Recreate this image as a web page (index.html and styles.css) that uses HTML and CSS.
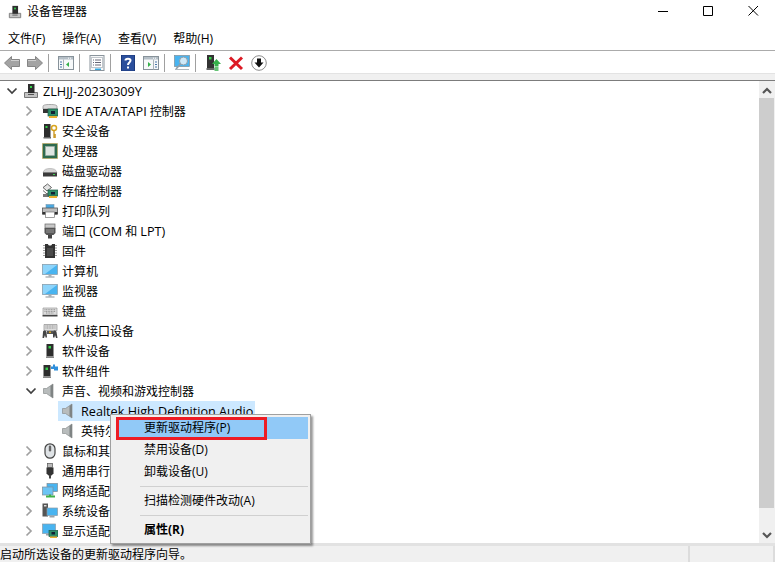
FILE: index.html
```html
<!DOCTYPE html>
<html lang="zh-CN">
<head>
<meta charset="utf-8">
<title>设备管理器</title>
<link rel="stylesheet" href="styles.css">
</head>
<body>
<svg class="defs" width="0" height="0" aria-hidden="true">
  <defs>
    <symbol id="i-chev-r" viewBox="0 0 8 12"><path d="M1.500 1.500 6 6l-4.500 4.500" fill="none" stroke="#a0a0a0" stroke-width="1.700"/></symbol>
    <symbol id="i-chev-d" viewBox="0 0 12 8"><path d="M1.500 1.500 6 6l4.500-4.500" fill="none" stroke="#404040" stroke-width="1.700"/></symbol>
    <symbol id="i-tower" viewBox="0 0 16 16">
      <path d="M1.500 9.500h13v5h-13z" fill="#c4c4c4" stroke="#777"/>
      <rect x="5" y="1" width="6.500" height="9" fill="#2d2d2d"/>
      <rect x="7" y="3" width="2" height="2" fill="#35d04a"/>
      <rect x="5" y="11" width="6" height="1" fill="#555"/>
    </symbol>
    <symbol id="i-ide" viewBox="0 0 16 16">
      <path d="M1 3.500C1 2 3 1.500 8 1.500s7 .5 7 2V6H1z" fill="#dcdcdc" stroke="#8a8a8a" stroke-width=".7"/>
      <rect x="1" y="6" width="13" height="4" fill="#333"/>
      <rect x="6" y="6" width="10" height="7" fill="#2f8f6a" stroke="#1c5a44" stroke-width=".7"/>
      <rect x="9" y="8" width="4" height="3" fill="#123"/>
      <rect x="7" y="13" width="8" height="2" fill="#e8b030"/>
    </symbol>
    <symbol id="i-sec" viewBox="0 0 16 16">
      <rect x="2" y="1" width="6.500" height="13" fill="#2d2d2d"/>
      <rect x="3.500" y="3" width="2" height="2" fill="#35d04a"/>
      <rect x="1.500" y="14" width="7.500" height="1.500" fill="#666"/>
      <circle cx="12" cy="5" r="2.500" fill="none" stroke="#d9a520" stroke-width="1.500"/>
      <path d="M12 7.500V15m0-3h2m-2 2h2" fill="none" stroke="#c8921a" stroke-width="1.300"/>
    </symbol>
    <symbol id="i-cpu" viewBox="0 0 16 16">
      <rect x=".5" y=".5" width="15" height="15" fill="#2f6b4f" stroke="#c9a548" stroke-dasharray="1 1"/>
      <rect x="1.500" y="1.500" width="13" height="13" fill="#2f6b4f"/>
      <rect x="3.500" y="3.500" width="9" height="9" fill="#dfe6e2" stroke="#9fb0a8" stroke-width=".6"/>
    </symbol>
    <symbol id="i-disk" viewBox="0 0 16 16">
      <path d="M1 9.500C2 6.500 4 5.500 8 5.500s6 1 7 4z" fill="#d4d4d4" stroke="#aaa" stroke-width=".6"/>
      <rect x="1" y="9.500" width="14" height="4" fill="#3a3a3a"/>
      <rect x="11" y="11" width="2" height="1" fill="#40d050"/>
    </symbol>
    <symbol id="i-store" viewBox="0 0 16 16">
      <path d="M1 4.500 5.500 1 9.500 4.500 5 8z" fill="#e4e4e4" stroke="#444" stroke-width=".8"/>
      <path d="M1 7.500 5 11l1-.8" fill="none" stroke="#444" stroke-width=".8"/>
      <rect x="1" y="11" width="6" height="3" fill="#777"/>
      <rect x="6" y="7" width="10" height="6" fill="#2f8f6a" stroke="#1c5a44" stroke-width=".7"/>
      <rect x="9" y="9" width="4" height="2.500" fill="#123"/>
      <rect x="7" y="13" width="8" height="2" fill="#e8b030"/>
    </symbol>
    <symbol id="i-print" viewBox="0 0 16 16">
      <rect x="4" y="1.500" width="8" height="4" fill="#4aa8e0" stroke="#7a9ab0" stroke-width=".6"/>
      <rect x=".5" y="5" width="15" height="6" fill="#bdbdbd" stroke="#555" stroke-width=".8"/>
      <rect x=".5" y="9" width="15" height="2.500" fill="#333"/>
      <rect x="3.500" y="9" width="9" height="5.500" fill="#fff" stroke="#777" stroke-width=".7"/>
    </symbol>
    <symbol id="i-port" viewBox="0 0 16 16">
      <rect x="3" y="1" width="10" height="4" fill="#c8c8c8" stroke="#666" stroke-width=".7"/>
      <path d="M2.500 5h11v5l-2 2h-7l-2-2z" fill="#555"/>
      <path d="M4 7h8M4 9h8" stroke="#aaa" stroke-width=".8"/>
      <rect x="6" y="12" width="4" height="3.500" fill="#444"/>
    </symbol>
    <symbol id="i-firm" viewBox="0 0 16 16">
      <path d="M3 1h3c0 2 4 2 4 0h3v14H3z" fill="#333"/>
      <path d="M1 2.500h2M1 5h2M1 7.500h2M1 10h2M1 12.500h2M13 2.500h2M13 5h2M13 7.500h2M13 10h2M13 12.500h2" stroke="#999"/>
      <path d="M5 5h6v8H5z" fill="#4a4a4a"/>
    </symbol>
    <symbol id="i-pc" viewBox="0 0 16 16">
      <rect x=".5" y="1.500" width="15" height="10" fill="#49b4f0" stroke="#8a9aa5" stroke-width=".7"/>
      <path d="M1 2h14L3 11H1z" fill="#8ed4fa"/>
      <rect x="6.500" y="11.500" width="3" height="2" fill="#a8b0b5"/>
      <rect x="3.500" y="13.500" width="9" height="1" fill="#8a9298"/>
    </symbol>
    <symbol id="i-kbd" viewBox="0 0 16 16">
      <path d="M1 5h14v7H1z" fill="#dcdcdc" stroke="#9a9a9a" stroke-width=".7"/>
      <path d="M2.500 6.700h11M2.500 8.400h11M4 10h8" stroke="#8f8f8f" stroke-dasharray="1 .6"/>
      <rect x=".5" y="12" width="15" height="1.500" fill="#444"/>
    </symbol>
    <symbol id="i-hid" viewBox="0 0 16 16">
      <path d="M2 1.500h13v6H2z" fill="#dcdcdc" stroke="#8f8f8f" stroke-width=".7"/>
      <path d="M3.500 3h10M3.500 5h10" stroke="#8f8f8f" stroke-dasharray="1 .6"/>
      <path d="M1 9c0-2 3-2 3.500 0l.5 5.500H3.500L3 12l-1 3H.5z" fill="#444"/>
      <path d="M11 9c0-2 3-2 3.500 0l1 6H14l-1-3-.5 2.500H11z" fill="#444"/>
      <path d="M5 8h6v3H5z" fill="#555"/>
      <rect x="7" y="8.500" width="2" height="1.500" fill="#d9a520"/>
    </symbol>
    <symbol id="i-soft" viewBox="0 0 16 16">
      <rect x="4.500" y="1" width="7" height="12.500" fill="#2d2d2d"/>
      <rect x="6.500" y="3" width="2.500" height="2.500" fill="#35d04a"/>
      <rect x="4" y="13.500" width="8" height="1.500" fill="#888"/>
    </symbol>
    <symbol id="i-comp" viewBox="0 0 16 16">
      <rect x="1.500" y="2" width="7" height="11.500" fill="#2d2d2d"/>
      <rect x="3.500" y="4.500" width="2.500" height="2.500" fill="#35d04a"/>
      <rect x="1" y="13.500" width="8" height="1.500" fill="#888"/>
      <path d="M9 3.500h2V1.500h2v2h3v4h-4V6H9z" fill="#2f8fdc"/>
    </symbol>
    <symbol id="i-spk" viewBox="0 0 16 16">
      <path d="M1.500 5.500h3L11 1v14L4.500 10.500h-3z" fill="#b8bcbc" stroke="#8a8e8e" stroke-width=".7"/>
      <path d="M8.500 3v10L11 15V1z" fill="#7f8484"/>
    </symbol>
    <symbol id="i-mouse" viewBox="0 0 16 16">
      <rect x="3" y=".8" width="10" height="14.400" rx="5" fill="#dfe3e6" stroke="#444" stroke-width="1.200"/>
      <rect x="6.800" y="2.500" width="2.400" height="6" rx="1.200" fill="#666"/>
    </symbol>
    <symbol id="i-usb" viewBox="0 0 16 16">
      <rect x="5.500" y=".5" width="5" height="4" fill="#bbb" stroke="#555" stroke-width=".7"/>
      <path d="M4.500 4.500h7v6l-2 2h-3l-2-2z" fill="#333"/>
      <rect x="7" y="12" width="2" height="3.500" fill="#444"/>
    </symbol>
    <symbol id="i-net" viewBox="0 0 16 16">
      <rect x="5" y=".5" width="10.500" height="8" fill="#49b4f0" stroke="#7e8e98" stroke-width=".7"/>
      <rect x=".5" y="4" width="10.500" height="8" fill="#6cc4f4" stroke="#7e8e98" stroke-width=".7"/>
      <path d="M4 13.500h9" stroke="#3fb04a" stroke-width="2"/>
      <path d="M8 11.500v2" stroke="#3fb04a" stroke-width="2"/>
    </symbol>
    <symbol id="i-sys" viewBox="0 0 16 16">
      <rect x=".5" y=".5" width="5.500" height="13" fill="#555"/>
      <rect x="2" y="2" width="2.500" height="1.500" fill="#ddd"/>
      <rect x="5" y="5" width="10.500" height="7.500" fill="#49b4f0" stroke="#8a9aa5" stroke-width=".7"/>
      <rect x="7.500" y="13" width="5" height="1.500" fill="#9aa2a8"/>
    </symbol>
    <symbol id="i-disp" viewBox="0 0 16 16">
      <rect x=".5" y="1" width="13" height="9.500" fill="#49b4f0" stroke="#8a9aa5" stroke-width=".7"/>
      <rect x="4" y="11" width="5" height="1.500" fill="#9aa2a8"/>
      <rect x="7" y="7.500" width="9" height="6" fill="#2f8f6a" stroke="#1c5a44" stroke-width=".7"/>
      <rect x="9.500" y="9" width="3.500" height="2.500" fill="#123"/>
      <rect x="8" y="13.500" width="7" height="1.500" fill="#e8b030"/>
    </symbol>
    <symbol id="t-pane" viewBox="0 0 16 16">
      <rect x=".5" y="1.500" width="15" height="13" fill="#f7f9fa" stroke="#87929a"/>
      <rect x="1" y="2" width="14" height="2.500" fill="#b5bfc7"/>
      <path d="M10 3.200h1M12 3.200h1" stroke="#fff"/>
    </symbol>
  </defs>
</svg>

<div class="window">
  <header class="titlebar">
    <svg class="title-icon"><use href="#i-tower"/></svg>
    <span class="title-text">设备管理器</span>
    <div class="winctl">
      <svg class="ctl" viewBox="0 0 45 24"><path d="M18 11.500h10" stroke="#000" fill="none"/></svg>
      <svg class="ctl" viewBox="0 0 45 24"><path d="M18.500 6.500h9v9h-9z" stroke="#000" fill="none"/></svg>
      <svg class="ctl" viewBox="0 0 45 24"><path d="M18.500 6l9.500 9.500M28 6l-9.500 9.500" stroke="#000" fill="none"/></svg>
    </div>
  </header>

  <nav class="menubar">
    <span class="menu-item">文件(F)</span>
    <span class="menu-item">操作(A)</span>
    <span class="menu-item">查看(V)</span>
    <span class="menu-item">帮助(H)</span>
  </nav>

  <div class="toolbar">
    <span class="tool"><svg viewBox="0 0 16 16"><path d="M.5 8 7.500 1.500V4.500h8v7h-8v3z" fill="#a3a3a3" stroke="#858585"/><path d="M7 5.500h8" stroke="#cfcfcf"/></svg></span>
    <span class="tool"><svg viewBox="0 0 16 16"><path d="M15.500 8 8.500 1.500V4.500h-8v7h8v3z" fill="#a3a3a3" stroke="#858585"/><path d="M1 5.500h8" stroke="#cfcfcf"/></svg></span>
    <span class="tool-sep"></span>
    <span class="tool"><svg viewBox="0 0 16 16"><use href="#t-pane"/><path d="M5.500 4.500v10" stroke="#aab3ba"/><path d="M2 7h2M2 9.500h2M2 12h2" stroke="#4a76a8" stroke-width="1.200"/><path d="M8 9.500 11 7v5z" fill="#35b04a"/></svg></span>
    <span class="tool-sep"></span>
    <span class="tool"><svg viewBox="0 0 16 16"><rect x="1" y=".5" width="14" height="15" fill="#f6f7f8" stroke="#8a949c"/><rect x="2.500" y="2.500" width="11" height="10" fill="#fff" stroke="#c0c6cc"/><path d="M4 5h1M6 5h6M4 7.500h1M6 7.500h6M4 10h1M6 10h6" stroke="#667"/><rect x="6" y="13.500" width="6" height="1.500" fill="#35a8e0"/></svg></span>
    <span class="tool-sep"></span>
    <span class="tool"><svg viewBox="0 0 16 16"><rect x="1.500" y="0" width="13" height="16" fill="#2b4f9c"/><rect x="1.500" y="0" width="13" height="16" fill="none" stroke="#1c3a7c"/><path d="M5.500 5.500C5.500 3 10.500 3 10.500 5.500 10.500 7.500 8 7.500 8 10" fill="none" stroke="#fff" stroke-width="2"/><rect x="7" y="11.500" width="2" height="2" fill="#fff"/></svg></span>
    <span class="tool"><svg viewBox="0 0 16 16"><use href="#t-pane"/><path d="M10.500 4.500v10" stroke="#aab3ba"/><path d="M12 7h2M12 9.500h2M12 12h2" stroke="#4a76a8" stroke-width="1.200"/><path d="M5 7l3 2.500L5 12z" fill="#35b04a"/></svg></span>
    <span class="tool-sep"></span>
    <span class="tool"><svg viewBox="0 0 16 16"><rect x=".5" y=".5" width="15" height="11" fill="#49b4f0" stroke="#7e8e98" stroke-width=".7"/><circle cx="9.500" cy="6" r="4" fill="#cfe9f8" stroke="#8f9ea8"/><path d="M6.500 9 2 14" stroke="#8f9ea8" stroke-width="1.600"/><path d="M1 14.500h14" stroke="#b0b8be"/></svg></span>
    <span class="tool-sep"></span>
    <span class="tool"><svg viewBox="0 0 16 16"><rect x="2" y="0" width="7" height="13" fill="#333"/><rect x="4" y="2" width="2.500" height="2.500" fill="#35d04a"/><rect x="1.500" y="13" width="8" height="2" fill="#666"/><path d="M11.500 4 16 9h-2.500v2.500h-4V9H7z" fill="#35b04a"/><path d="M9.500 13h4M9.500 15h4" stroke="#35b04a" stroke-width="1.400"/></svg></span>
    <span class="tool"><svg viewBox="0 0 16 16"><path d="M2 2.500 14 14M14 2.500 2 14" stroke="#dc1a24" stroke-width="3"/></svg></span>
    <span class="tool"><svg viewBox="0 0 16 16"><circle cx="8" cy="8" r="7.300" fill="#fff" stroke="#8c8c8c"/><path d="M6 3.500h4v4h2.500L8 12.500 3.500 7.500H6z" fill="#111"/></svg></span>
  </div>
  <div class="toolbar-band"></div>

  <main class="body">
    <ul class="tree">
      <li class="row root"><svg class="chev-d"><use href="#i-chev-d"/></svg><svg class="ic"><use href="#i-tower"/></svg><span class="lat">ZLHJJ-20230309Y</span></li>
      <li class="row"><svg class="chev"><use href="#i-chev-r"/></svg><svg class="ic"><use href="#i-ide"/></svg><span><span class="lat">IDE ATA/ATAPI</span> 控制器</span></li>
      <li class="row"><svg class="chev"><use href="#i-chev-r"/></svg><svg class="ic"><use href="#i-sec"/></svg><span>安全设备</span></li>
      <li class="row"><svg class="chev"><use href="#i-chev-r"/></svg><svg class="ic"><use href="#i-cpu"/></svg><span>处理器</span></li>
      <li class="row"><svg class="chev"><use href="#i-chev-r"/></svg><svg class="ic"><use href="#i-disk"/></svg><span>磁盘驱动器</span></li>
      <li class="row"><svg class="chev"><use href="#i-chev-r"/></svg><svg class="ic"><use href="#i-store"/></svg><span>存储控制器</span></li>
      <li class="row"><svg class="chev"><use href="#i-chev-r"/></svg><svg class="ic"><use href="#i-print"/></svg><span>打印队列</span></li>
      <li class="row"><svg class="chev"><use href="#i-chev-r"/></svg><svg class="ic"><use href="#i-port"/></svg><span>端口 <span class="lat">(COM</span> 和 <span class="lat">LPT)</span></span></li>
      <li class="row"><svg class="chev"><use href="#i-chev-r"/></svg><svg class="ic"><use href="#i-firm"/></svg><span>固件</span></li>
      <li class="row"><svg class="chev"><use href="#i-chev-r"/></svg><svg class="ic"><use href="#i-pc"/></svg><span>计算机</span></li>
      <li class="row"><svg class="chev"><use href="#i-chev-r"/></svg><svg class="ic"><use href="#i-pc"/></svg><span>监视器</span></li>
      <li class="row"><svg class="chev"><use href="#i-chev-r"/></svg><svg class="ic"><use href="#i-kbd"/></svg><span>键盘</span></li>
      <li class="row"><svg class="chev"><use href="#i-chev-r"/></svg><svg class="ic"><use href="#i-hid"/></svg><span>人机接口设备</span></li>
      <li class="row"><svg class="chev"><use href="#i-chev-r"/></svg><svg class="ic"><use href="#i-soft"/></svg><span>软件设备</span></li>
      <li class="row"><svg class="chev"><use href="#i-chev-r"/></svg><svg class="ic"><use href="#i-comp"/></svg><span>软件组件</span></li>
      <li class="row"><svg class="chev-d"><use href="#i-chev-d"/></svg><svg class="ic"><use href="#i-spk"/></svg><span>声音、视频和游戏控制器</span></li>
      <li class="row child selected"><svg class="ic"><use href="#i-spk"/></svg><span class="lat">Realtek High Definition Audio</span></li>
      <li class="row child"><svg class="ic"><use href="#i-spk"/></svg><span>英特尔(R) 显示器音频</span></li>
      <li class="row"><svg class="chev"><use href="#i-chev-r"/></svg><svg class="ic"><use href="#i-mouse"/></svg><span>鼠标和其他指针设备</span></li>
      <li class="row"><svg class="chev"><use href="#i-chev-r"/></svg><svg class="ic"><use href="#i-usb"/></svg><span>通用串行总线控制器</span></li>
      <li class="row"><svg class="chev"><use href="#i-chev-r"/></svg><svg class="ic"><use href="#i-net"/></svg><span>网络适配器</span></li>
      <li class="row"><svg class="chev"><use href="#i-chev-r"/></svg><svg class="ic"><use href="#i-sys"/></svg><span>系统设备</span></li>
      <li class="row"><svg class="chev"><use href="#i-chev-r"/></svg><svg class="ic"><use href="#i-disp"/></svg><span>显示适配器</span></li>
    </ul>
    <div class="scrollbar">
      <svg class="sb-arrow" viewBox="0 0 16 17"><path d="M4 12 8 8l4 4" fill="none" stroke="#555" stroke-width="2.200"/></svg>
      <div class="sb-thumb"></div>
      <div class="sb-rest"><svg class="sb-arrow" viewBox="0 0 16 17"><path d="M4 7l4 4 4-4" fill="none" stroke="#555" stroke-width="2.200"/></svg></div>
    </div>
  </main>

  <footer class="statusbar">
    <span class="status-main">启动所选设备的更新驱动程序向导。</span>
    <span class="status-cell"></span>
  </footer>
</div>

<div class="ctxmenu">
  <div class="ctx-item hot">更新驱动程序(P)</div>
  <div class="ctx-item">禁用设备(D)</div>
  <div class="ctx-item">卸载设备(U)</div>
  <div class="ctx-sep"></div>
  <div class="ctx-item">扫描检测硬件改动(A)</div>
  <div class="ctx-sep"></div>
  <div class="ctx-item bold">属性(R)</div>
  <div class="redbox"></div>
</div>
</body>
</html>
```

FILE: styles.css
```css
* { box-sizing: border-box; }
html, body { margin: 0; padding: 0; height: 100%; overflow: hidden; background: #fff; }
body {
  font-family: "Open Sans", "Noto Sans CJK SC", sans-serif;
  font-size: 12px;
  color: #000;
}
.defs { position: absolute; }
.window { width: 775px; height: 562px; display: flex; flex-direction: column; }

.titlebar { height: 24px; display: flex; align-items: center; padding-left: 8px; flex: none; }
.title-icon { width: 14px; height: 14px; margin: -1px 5px 0 0; }
.title-text { flex: 1; margin-top: -2px; }
.winctl { display: flex; }
.ctl { width: 45px; height: 24px; display: block; }

.menubar { height: 27px; padding: 1px 0 0 8px; display: flex; gap: 17px; align-items: center; flex: none; border-bottom: 1px solid #ababab; }

.toolbar { height: 23px; padding-top: 2px; display: flex; align-items: center; flex: none; border-bottom: 1px solid #e3e3e3; }
.tool { width: 23px; height: 20px; display: flex; align-items: center; justify-content: center; }
.tool svg { width: 16px; height: 16px; display: block; }
.tool-sep { width: 1px; height: 18px; background: #a0a0a0; margin: 0 5px 0 2px; }
.toolbar-band { height: 7px; background: #f0f0f0; border-bottom: 1px solid #7c7c7c; flex: none; }

.body { flex: 1; min-height: 0; display: flex; }
.tree { flex: 1; list-style: none; margin: 0; padding: 0; overflow: hidden; }
.row { height: 20px; display: flex; align-items: center; padding-left: 25px; white-space: nowrap; }
.row.root { padding-left: 6px; }
.chev { width: 8px; height: 12px; margin-right: 9px; flex: none; }
.chev-d { width: 12px; height: 8px; margin-right: 5px; flex: none; }
.ic { width: 16px; height: 16px; margin-right: 4px; flex: none; }
.lat { font-size: 12.65px; }
.row.child { padding-left: 0; margin-left: 58px; width: 197px; }
.row.child .ic { margin: 0 4px 0 3px; }
.row.selected { background: #cce8ff; }

.scrollbar { width: 16px; display: flex; flex-direction: column; background: #f0f0f0; flex: none; }
.sb-arrow { width: 16px; height: 17px; display: block; flex: none; }
.sb-thumb { height: 410px; background: #cdcdcd; margin-right: 1px; flex: none; }
.sb-rest { flex: 1; display: flex; flex-direction: column; justify-content: flex-end; }

.statusbar { height: 19px; flex: none; border-top: 3px solid #e2e2e2; background: #f0f0f0; display: flex; }
.status-main { width: 690px; padding-top: 2px; border-right: 2px solid #dcdcdc; line-height: 14px; white-space: nowrap; }
.status-cell { width: 85px; border-right: 2px solid #dcdcdc; }

.ctxmenu {
  position: absolute; left: 110px; top: 414px; width: 201px; height: 130px;
  background: #f0f0f0; border: 1px solid #a0a0a0;
  padding: 2px 2px 2px 5px;
  box-shadow: 2px 2px 2px rgba(0,0,0,.4);
}
.ctx-item { height: 22px; line-height: 22px; padding-left: 28px; white-space: nowrap; }
.ctx-item.hot { background: #91c9f7; }
.ctx-item.bold { font-weight: 700; }
.ctx-sep { height: 4px; margin: 3px 0 0 24px; border-top: 1px solid #d0d0d0; }
.redbox { position: absolute; left: 5px; top: 2px; width: 151px; height: 23px; border: 3px solid #ed1c24; }
```
